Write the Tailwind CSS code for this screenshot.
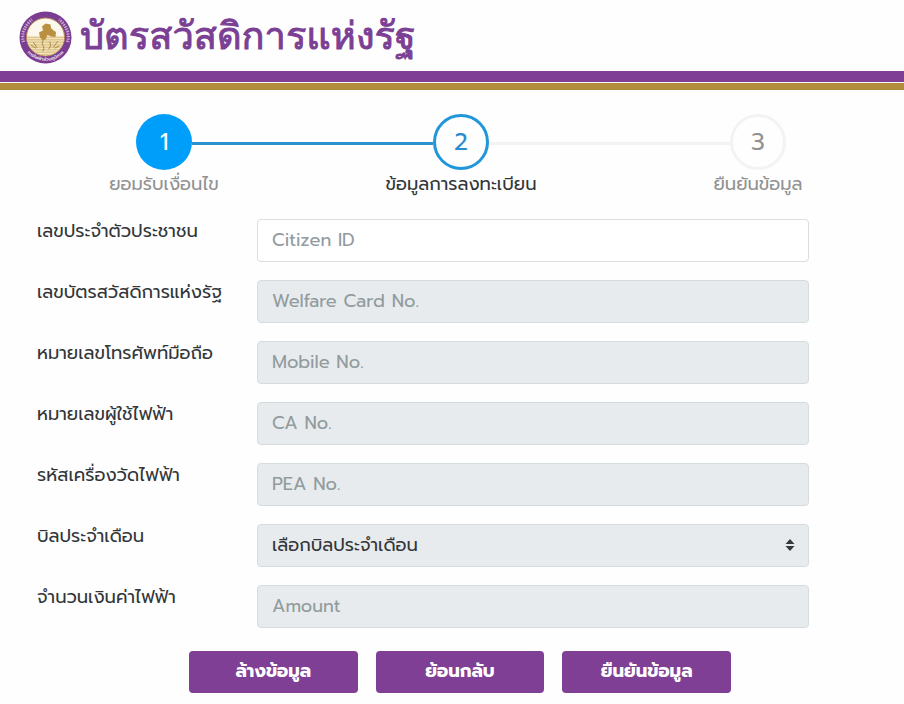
<!DOCTYPE html>
<html lang="th">
<head>
<meta charset="utf-8">
<meta name="viewport" content="width=device-width, initial-scale=1">
<title>บัตรสวัสดิการแห่งรัฐ</title>
<script src="https://cdn.jsdelivr.net/npm/@tailwindcss/browser@4"></script>
</head>
<body class="min-h-screen bg-[#fefefe] font-['Prompt','Noto_Sans_Thai','Noto_Sans',sans-serif] text-[#333639]">
<header>
  <div class="flex h-[71px] items-center gap-2 px-[19px] pt-1">
    <svg class="size-[53px] shrink-0" viewBox="0 0 106 106" role="img" aria-label="ตราสัญลักษณ์">
      <defs><clipPath id="disc"><circle cx="53" cy="52" r="37"/></clipPath><path id="rim" d="M10 68 A46 46 0 0 0 96 68"/></defs>
      <circle cx="53" cy="53" r="52" fill="#7b3d91"/>
      <g fill="none" stroke="#cdb2d6">
        <path d="M9 62 C4 46 12 28 26 17 M97 62 C102 46 94 28 80 17" stroke-width="7" stroke-dasharray="2 3"/>
        <path d="M9 62 C4 46 12 28 26 17 M97 62 C102 46 94 28 80 17" stroke-width="1"/>
      </g>
      <circle cx="53" cy="52" r="38" fill="#fdf8ec" stroke="#b58b55" stroke-width="2"/>
      <g clip-path="url(#disc)">
        <path d="M14 51H92V90H14Z" fill="#e0c78d"/>
        <path d="M14 55H92M14 60H92M14 65H92M14 70H92M14 75H92M14 80H92M14 85H92" stroke="#f7edcf" stroke-width="1.5"/>
        <path d="M29 63l7 10M33 74l-8-5M77 61l-8 11M72 74l8-4M49 56q-5 8-1 13t0 11M62 62q4 8-2 14" fill="none" stroke="#a3823c" stroke-width="1.8" stroke-linecap="round"/>
      </g>
      <path d="M40 43l8-4-2-8 7-6 10 2 1 7 4 4 6 4-1 10-9-1-7-3-4 9-6 1-5-5z" fill="#b8903f"/>
      <text font-size="9" font-weight="600" fill="#f2e8f4" text-anchor="middle" dy="2"><textPath href="#rim" startOffset="50%">การไฟฟ้าส่วนภูมิภาค</textPath></text>
    </svg>
    <h1 class="pb-1 font-['Loma','Tahoma',sans-serif] text-[38px] leading-[52px] font-medium whitespace-nowrap text-[#7b3f94] [-webkit-text-stroke:1px_#7b3f94]">บัตรสวัสดิการแห่งรัฐ</h1>
  </div>
  <div class="h-[19px] border-t-[11px] border-b-[7px] border-t-[#7f3f94] border-b-[#b18c3d] bg-white"></div>
</header>

<main>
  <ol class="flex items-start pt-6 pr-[118px] pl-[136px] text-lg leading-7 whitespace-nowrap text-[#929292]">
    <li class="flex w-14 flex-col items-center">
      <span class="flex size-14 shrink-0 items-center justify-center rounded-full bg-[#009efb] text-2xl text-white">1</span>
      <span>ยอมรับเงื่อนไข</span>
    </li>
    <li class="mt-7 h-[3px] flex-1 bg-[#2b92d0]" aria-hidden="true"></li>
    <li class="flex w-14 flex-col items-center" aria-current="step">
      <span class="flex size-14 shrink-0 items-center justify-center rounded-full border-[3px] border-[#2196d9] text-2xl text-[#2b8ccc]">2</span>
      <span class="text-[#333639]">ข้อมูลการลงทะเบียน</span>
    </li>
    <li class="mt-7 h-[3px] flex-1 bg-[#f3f3f3]" aria-hidden="true"></li>
    <li class="flex w-14 flex-col items-center">
      <span class="flex size-14 shrink-0 items-center justify-center rounded-full border-[3px] border-[#f3f3f3] text-2xl">3</span>
      <span>ยืนยันข้อมูล</span>
    </li>
  </ol>

  <form class="pt-[21px] pr-[95px] pl-[37px] text-lg leading-6">
    <div class="grid grid-cols-[220px_1fr] gap-y-[18px]">
      <label for="citizen">เลขประจำตัวประชาชน</label>
      <input id="citizen" placeholder="Citizen ID" class="h-[43px] w-full rounded border border-[#d9dee0] bg-white px-3.5 pb-0.5 placeholder:text-[#929b9e]">
      <label for="card">เลขบัตรสวัสดิการแห่งรัฐ</label>
      <input id="card" disabled placeholder="Welfare Card No." class="h-[43px] w-full rounded border border-[#d5dcdf] bg-[#e7ebed] px-3.5 pb-0.5 placeholder:text-[#929b9e]">
      <label for="mobile">หมายเลขโทรศัพท์มือถือ</label>
      <input id="mobile" disabled placeholder="Mobile No." class="h-[43px] w-full rounded border border-[#d5dcdf] bg-[#e7ebed] px-3.5 pb-0.5 placeholder:text-[#929b9e]">
      <label for="ca">หมายเลขผู้ใช้ไฟฟ้า</label>
      <input id="ca" disabled placeholder="CA No." class="h-[43px] w-full rounded border border-[#d5dcdf] bg-[#e7ebed] px-3.5 pb-0.5 placeholder:text-[#929b9e]">
      <label for="pea">รหัสเครื่องวัดไฟฟ้า</label>
      <input id="pea" disabled placeholder="PEA No." class="h-[43px] w-full rounded border border-[#d5dcdf] bg-[#e7ebed] px-3.5 pb-0.5 placeholder:text-[#929b9e]">
      <label for="bill">บิลประจำเดือน</label>
      <div class="relative">
        <select id="bill" disabled class="block h-[43px] w-full appearance-none rounded border border-[#d5dcdf] bg-[#e7ebed] px-3.5 pb-0.5 text-[#333639] opacity-100"><option>เลือกบิลประจำเดือน</option></select>
        <svg class="pointer-events-none absolute top-[15px] right-3.5 h-3 w-2.5" viewBox="0 0 10 12" fill="#343a40" aria-hidden="true"><path d="M5 0L9.5 5H.5zM5 12L.5 7H9.5z"/></svg>
      </div>
      <label for="amount">จำนวนเงินค่าไฟฟ้า</label>
      <input id="amount" disabled placeholder="Amount" class="h-[43px] w-full rounded border border-[#d5dcdf] bg-[#e7ebed] px-3.5 pb-0.5 placeholder:text-[#929b9e]">
    </div>
    <div class="grid grid-cols-3 gap-[18px] pt-[23px] pr-[78px] pb-[11px] pl-[152px] font-bold text-white">
      <button type="reset" class="h-[42px] rounded bg-[#7f3f94] pb-0.5">ล้างข้อมูล</button>
      <button type="button" class="h-[42px] rounded bg-[#7f3f94] pb-0.5">ย้อนกลับ</button>
      <button type="submit" class="h-[42px] rounded bg-[#7f3f94] pb-0.5">ยืนยันข้อมูล</button>
    </div>
  </form>
</main>
</body>
</html>
